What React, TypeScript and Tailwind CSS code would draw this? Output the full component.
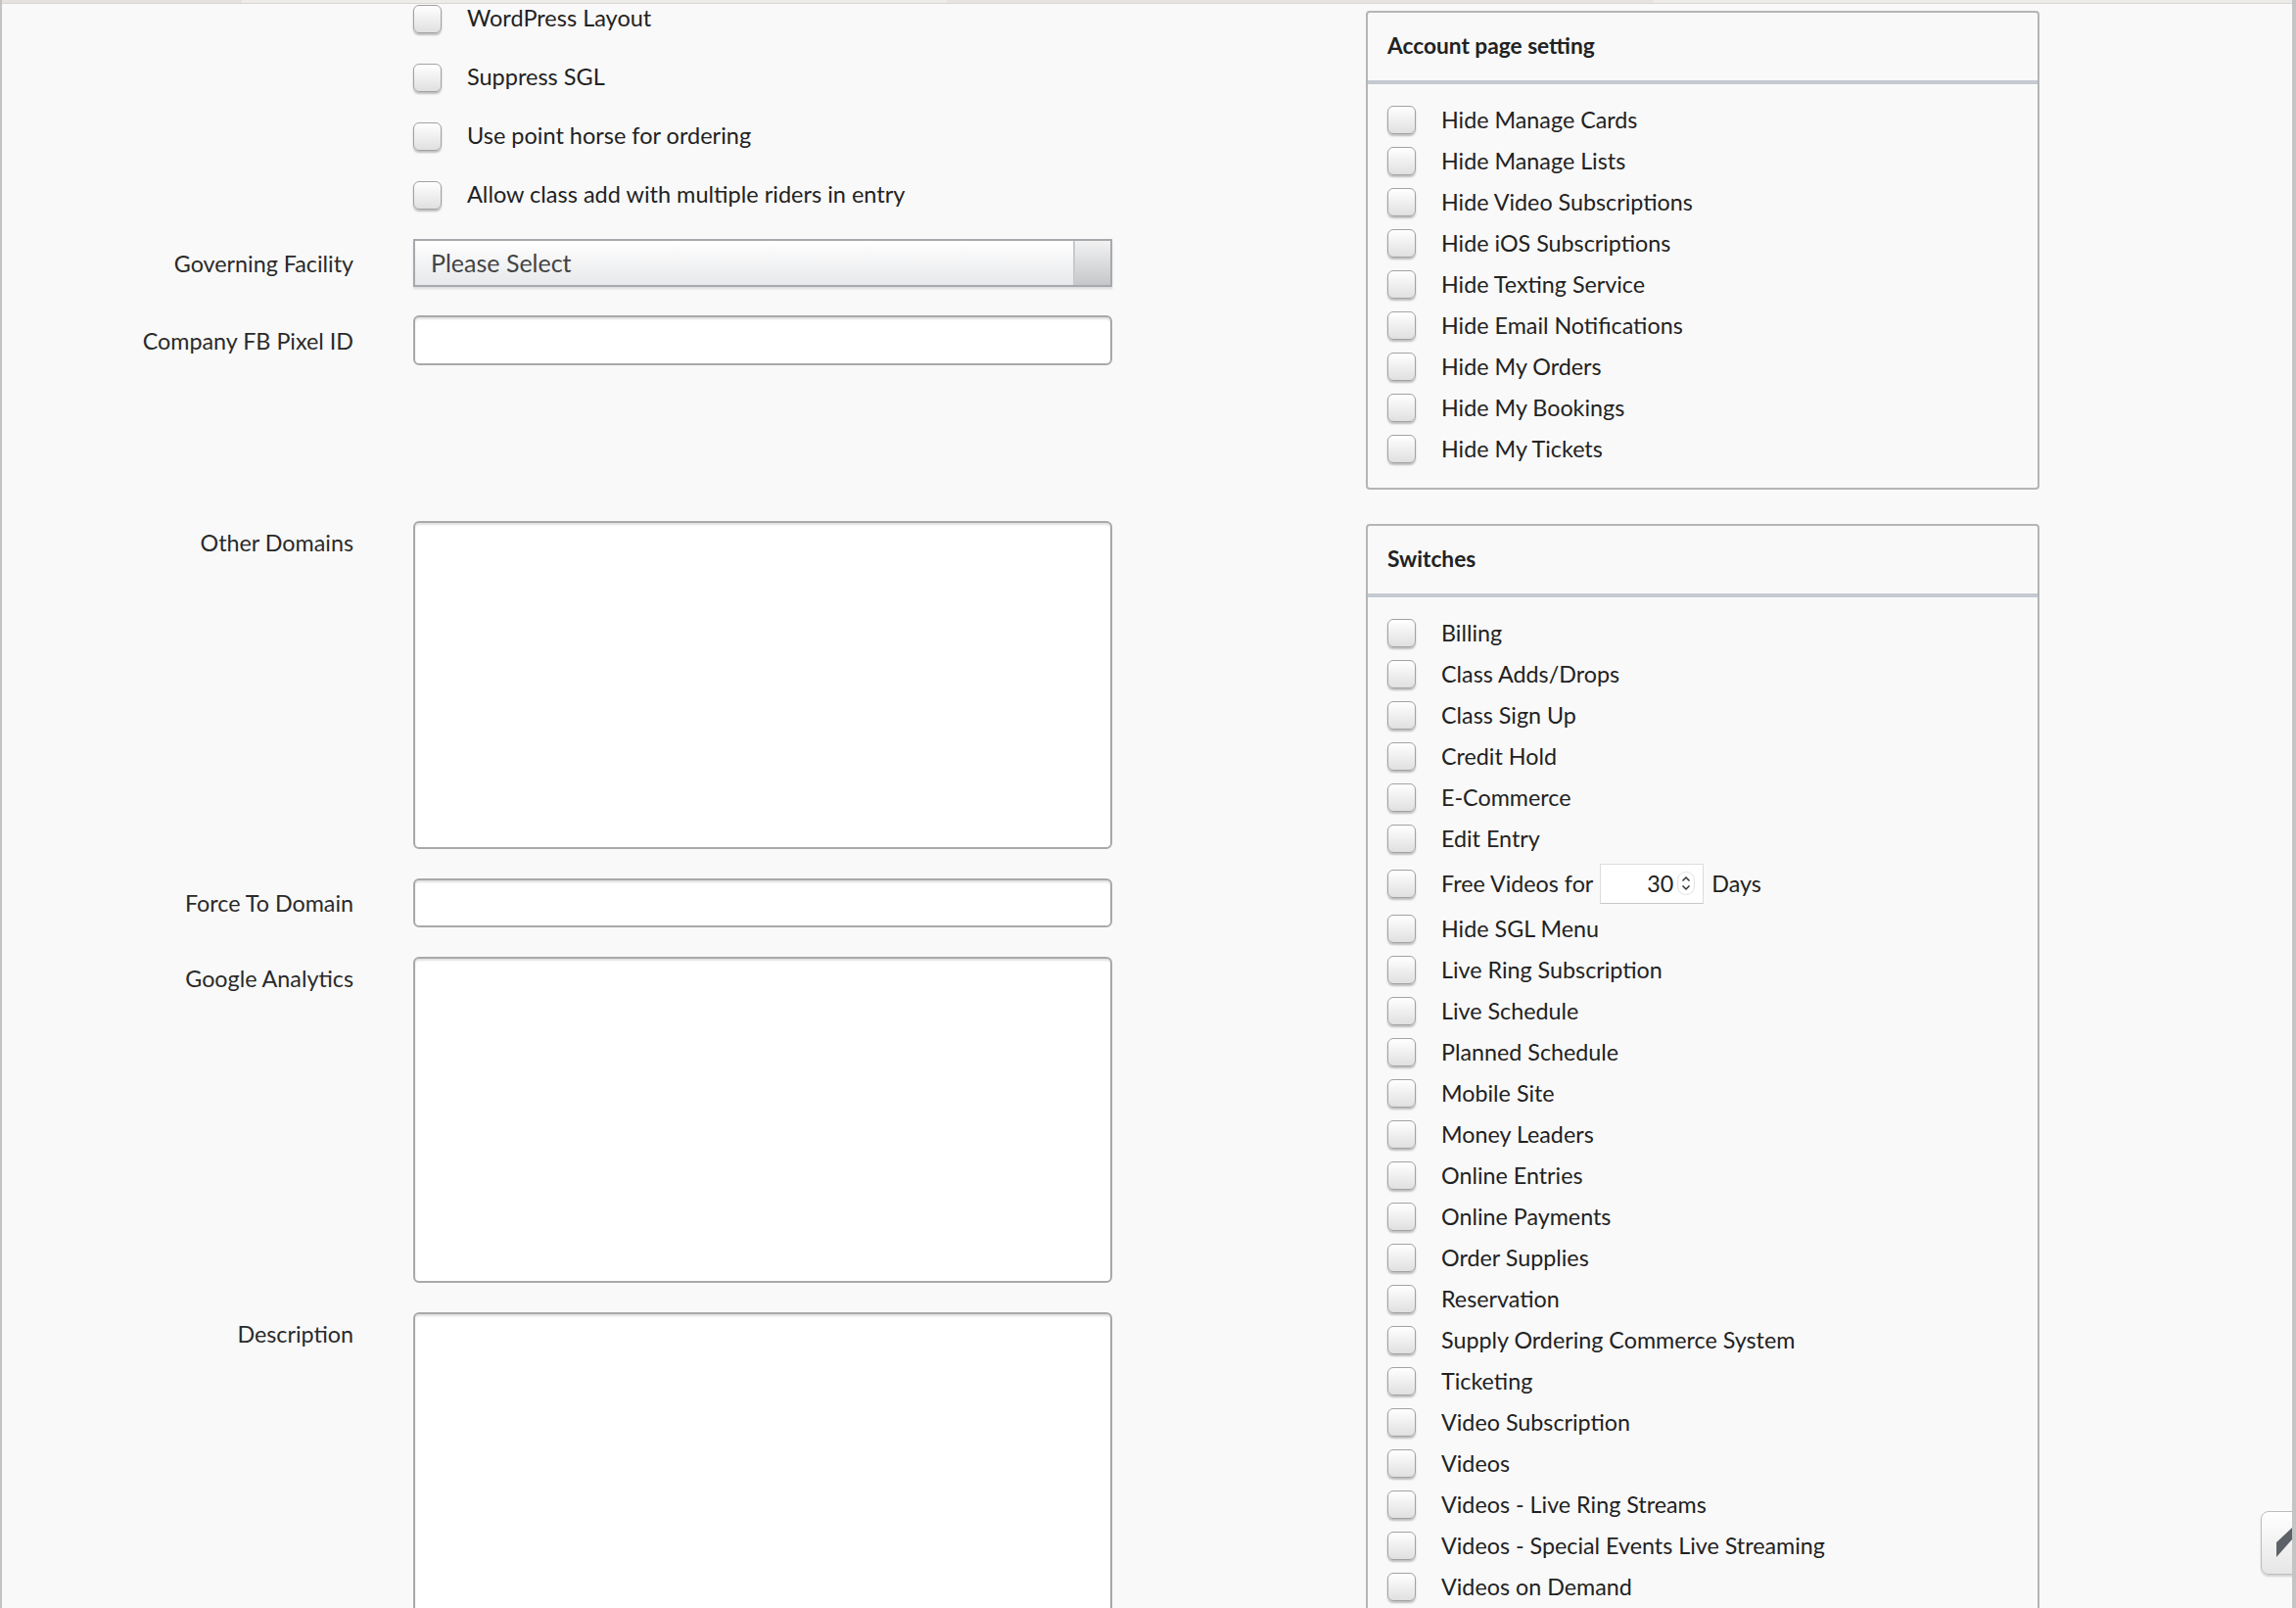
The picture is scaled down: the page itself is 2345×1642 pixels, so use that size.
import React from "react";

const FONT = { fontFamily: "Lato, 'Open Sans', sans-serif" };

function Box() {
  return (
    <div className="w-[29px] h-[29px] shrink-0 rounded-[6px] border border-[#a2a2a2] bg-gradient-to-b from-white to-[#e0e0e0] shadow-[0_2px_2px_rgba(0,0,0,0.24)]" />
  );
}

function PanelRow({ label }: { label: string }) {
  return (
    <div className="h-[42px] flex items-center gap-[26px]">
      <Box />
      <span className="text-[23.3px] text-[#222]">{label}</span>
    </div>
  );
}

function Panel({
  title,
  children,
  pb,
}: {
  title: string;
  children: React.ReactNode;
  pb: string;
}) {
  return (
    <div className="w-[688px] rounded-[4px] border-2 border-[#b5b5b5] bg-[#f9f9f9]">
      <div className="h-[73px] flex items-center pl-[20px] border-b-4 border-[#c5cad1]">
        <span className="text-[22.7px] font-bold text-[#222]">{title}</span>
      </div>
      <div className={`pl-[20px] pt-[15px] ${pb}`}>{children}</div>
    </div>
  );
}

function FieldRow({
  label,
  children,
  top = false,
}: {
  label?: string;
  children: React.ReactNode;
  top?: boolean;
}) {
  return (
    <div className={`flex ${top ? "items-start" : "items-center"}`}>
      <div
        className={`w-[359px] shrink-0 text-right text-[23.3px] leading-[30px] text-[#2a2a2a] ${top ? "pt-[7px]" : ""}`}
      >
        {label}
      </div>
      <div className="ml-[61px] w-[714px]">{children}</div>
    </div>
  );
}

function CheckRow({ label }: { label: string }) {
  return (
    <FieldRow>
      <div className="h-[30px] flex items-center gap-[26px]">
        <Box />
        <span className="text-[23.5px] text-[#222]">{label}</span>
      </div>
    </FieldRow>
  );
}

const textInput =
  "block w-full bg-white border-2 border-[#a9a9a9] rounded-[6px] shadow-[inset_0_2px_2px_rgba(0,0,0,0.12)] outline-none";

const account = [
  "Hide Manage Cards",
  "Hide Manage Lists",
  "Hide Video Subscriptions",
  "Hide iOS Subscriptions",
  "Hide Texting Service",
  "Hide Email Notifications",
  "Hide My Orders",
  "Hide My Bookings",
  "Hide My Tickets",
];

const switchesA = ["Billing", "Class Adds/Drops", "Class Sign Up", "Credit Hold", "E-Commerce", "Edit Entry"];
const switchesB = [
  "Hide SGL Menu",
  "Live Ring Subscription",
  "Live Schedule",
  "Planned Schedule",
  "Mobile Site",
  "Money Leaders",
  "Online Entries",
  "Online Payments",
  "Order Supplies",
  "Reservation",
  "Supply Ordering Commerce System",
  "Ticketing",
  "Video Subscription",
  "Videos",
  "Videos - Live Ring Streams",
  "Videos - Special Events Live Streaming",
  "Videos on Demand",
];

export default function App() {
  return (
    <div
      style={FONT}
      className="relative w-[2345px] h-[1642px] overflow-hidden bg-[#f9f9f9] border-l-2 border-r-2 border-[#c4c4c4]"
    >
      {/* top strip */}
      <div className="flex h-[3px]">
        <div className="w-[245px] bg-[#e5e2df]" />
        <div className="w-[720px] bg-[#eeece9]" />
        <div className="w-[722px] bg-[#e6e3e0]" />
        <div className="flex-1 bg-[#eeece9]" />
      </div>
      <div className="h-[1px] bg-[#d9d6d3]" />

      <div className="flex">
        {/* left form */}
        <div className="w-[1393px] shrink-0 flex flex-col">
          <div className="flex flex-col gap-[30px]">
            <CheckRow label="WordPress Layout" />
            <CheckRow label="Suppress SGL" />
            <CheckRow label="Use point horse for ordering" />
            <CheckRow label="Allow class add with multiple riders in entry" />
          </div>

          <div className="mt-[30px]">
            <FieldRow label="Governing Facility">
              <div className="flex h-[49px] border-2 border-[#a6a9ad] bg-gradient-to-b from-white to-[#e7e8ea] shadow-[0_2px_2px_rgba(0,0,0,0.12)]">
                <div className="flex-1 flex items-center pl-[16px] text-[25px] text-[#444]">Please Select</div>
                <div className="w-[38px] border-l-2 border-[#c9cacc] bg-gradient-to-b from-[#f2f2f3] to-[#c6c7c9]" />
              </div>
            </FieldRow>
          </div>

          <div className="mt-[29px]">
            <FieldRow label="Company FB Pixel ID">
              <input type="text" className={`${textInput} h-[51px]`} />
            </FieldRow>
          </div>

          <div className="mt-[159px]">
            <FieldRow label="Other Domains" top>
              <textarea className={`${textInput} h-[335px] resize-none`} />
            </FieldRow>
          </div>

          <div className="mt-[30px]">
            <FieldRow label="Force To Domain">
              <input type="text" className={`${textInput} h-[50px]`} />
            </FieldRow>
          </div>

          <div className="mt-[30px]">
            <FieldRow label="Google Analytics" top>
              <textarea className={`${textInput} h-[333px] resize-none`} />
            </FieldRow>
          </div>

          <div className="mt-[30px]">
            <FieldRow label="Description" top>
              <textarea className={`${textInput} h-[335px] resize-none`} />
            </FieldRow>
          </div>
        </div>

        {/* right panels */}
        <div className="flex flex-col mt-[7px] gap-[35px]">
          <Panel title="Account page setting" pb="pb-[19px]">
            {account.map((l) => (
              <PanelRow key={l} label={l} />
            ))}
          </Panel>

          <Panel title="Switches" pb="pb-[17px]">
            {switchesA.map((l) => (
              <PanelRow key={l} label={l} />
            ))}
            <div className="h-[50px] flex items-center gap-[26px]">
              <Box />
              <div className="flex items-center">
                <span className="text-[23.3px] text-[#222]">Free Videos for</span>
                <div className="ml-[7px] w-[106px] h-[41px] bg-white border border-[#dcdcdc] border-b-[#c8c8c8] flex items-center justify-end pr-[8px]">
                  <span className="text-[23.3px] text-[#222] mr-[4px]">30</span>
                  <svg width="18" height="24" viewBox="0 0 18 24">
                    <rect x="0.5" y="0.5" width="17" height="23" rx="8" fill="#fff" stroke="#e2e2e2" />
                    <path d="M5.5 9.5 L9 6 L12.5 9.5" fill="none" stroke="#333" strokeWidth="1.5" />
                    <path d="M5.5 14.5 L9 18 L12.5 14.5" fill="none" stroke="#333" strokeWidth="1.5" />
                  </svg>
                </div>
                <span className="ml-[8px] text-[23.3px] text-[#222]">Days</span>
              </div>
            </div>
            {switchesB.map((l) => (
              <PanelRow key={l} label={l} />
            ))}
          </Panel>
        </div>
      </div>

      {/* scroll-to-top button */}
      <div className="absolute left-[2307px] top-[1543px] w-[60px] h-[65px] rounded-[8px] border border-[#bdbdbd] bg-gradient-to-b from-white to-[#e6e6e6] shadow-[0_2px_2px_rgba(0,0,0,0.15)]">
        <svg className="absolute left-[15px] top-[16px]" width="40" height="34" viewBox="0 0 40 34">
          <polygon points="0,15 16,0 34,16 34,28 16,12 0,30" fill="#5d6168" />
        </svg>
      </div>
      <div className="absolute right-0 top-0 w-[2px] h-full bg-[#c4c4c4]" />
    </div>
  );
}
